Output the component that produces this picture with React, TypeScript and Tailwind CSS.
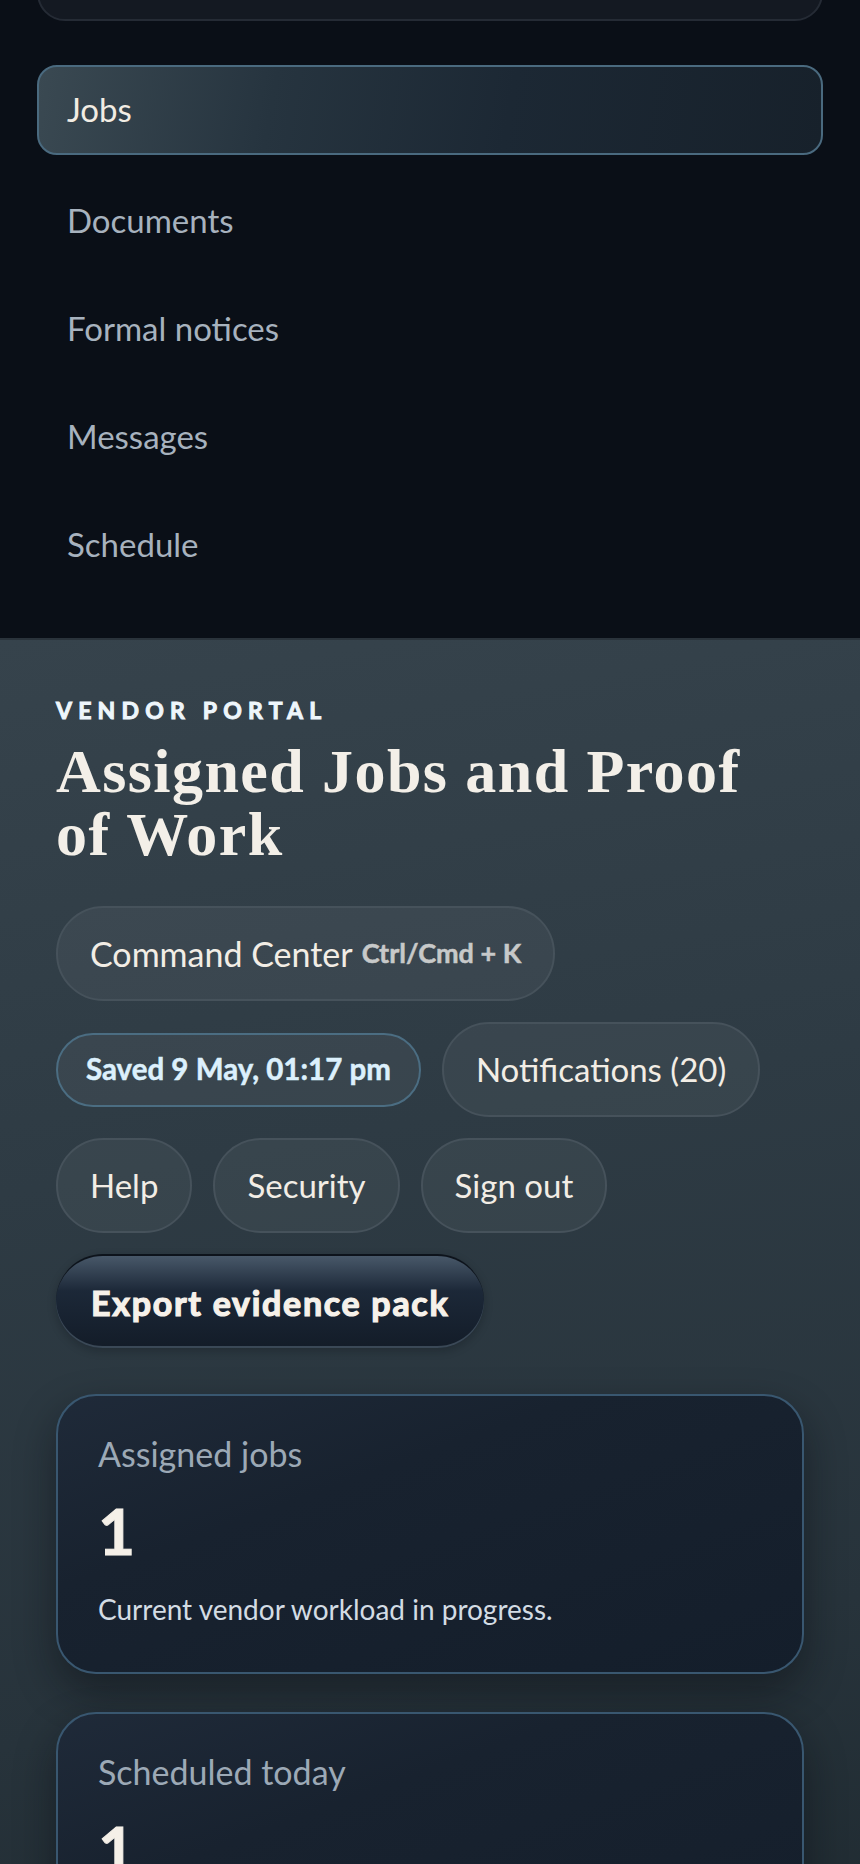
import React from "react";

const sans = "font-['Lato','Noto_Sans',sans-serif]";

function NavItem({ label, active = false }: { label: string; active?: boolean }) {
  if (active) {
    return (
      <div className="flex h-[90px] items-center rounded-[20px] border-2 border-[#4a6a7f] bg-[linear-gradient(100deg,#3a4952_0%,#26343f_30%,#1c2834_60%,#17212b_100%)] px-[28px] text-[33px] text-[#f1ece3]">
        {label}
      </div>
    );
  }
  return (
    <div className="flex h-[90px] items-center rounded-[20px] border-2 border-transparent px-[28px] text-[33px] text-[#a7b2be]">
      {label}
    </div>
  );
}

function Pill({ children, className = "" }: { children: React.ReactNode; className?: string }) {
  return (
    <div
      className={
        "flex h-[95px] items-center rounded-full border-2 border-[#46525b] bg-[#ffffff0d] px-[32px] text-[33px] text-[#f2ede5] " +
        className
      }
    >
      {children}
    </div>
  );
}

function StatCard({ label, value, desc }: { label: string; value: string; desc: string }) {
  return (
    <div className="rounded-[40px] border-2 border-[#395770] bg-[linear-gradient(160deg,#1f2a39_0%,#18222f_35%,#141e2b_100%)] px-[40px] pb-[47px] pt-[40px] shadow-[0_18px_40px_rgba(8,12,16,0.45)]">
      <div className="text-[34px] leading-[36px] text-[#9ca9b6]">{label}</div>
      <div className="mt-[27px] text-[64px] font-bold leading-none text-[#f5f0e8] [-webkit-text-stroke:1px_#f5f0e8]">
        {value}
      </div>
      <div className="mt-[30px] text-[28px] leading-[32px] text-[#d3dce4]">{desc}</div>
    </div>
  );
}

export default function App() {
  return (
    <div className={"w-[860px] overflow-hidden " + sans}>
      {/* Navigation panel */}
      <div className="bg-[#0a0f17] px-[37px] pb-[48px]">
        <div className="-mt-[80px] h-[101px] rounded-[28px] border-2 border-[#252b35] bg-[#141922]" />
        <div className="mt-[44px]">
          <NavItem label="Jobs" active />
        </div>
        <div className="mt-[21px] flex flex-col gap-[18px]">
          <NavItem label="Documents" />
          <NavItem label="Formal notices" />
          <NavItem label="Messages" />
          <NavItem label="Schedule" />
        </div>
      </div>

      {/* Main content */}
      <div className="border-t-2 border-[#2a333b] bg-[linear-gradient(170deg,#36434c_0%,#2e3b44_35%,#27333b_70%,#1d282e_100%)] px-[56px] pb-[80px] pt-[59px]">
        <div className="text-[23px] font-bold uppercase leading-[23px] tracking-[0.27em] text-[#eef6fb] [-webkit-text-stroke:1px_#eef6fb]">
          Vendor Portal
        </div>
        <h1 className="mt-[18px] max-w-[720px] font-['Liberation_Serif','Times_New_Roman',serif] text-[62px] font-bold leading-[63px] tracking-[0.023em] text-[#f3efe8]">
          Assigned Jobs and Proof of Work
        </h1>

        <div className="mt-[40px] flex flex-wrap items-center gap-[21px]">
          <Pill className="text-[34px]">
            <span>Command Center</span>
            <span className="ml-[9px] text-[27px] font-bold text-[#c7c9c9] [-webkit-text-stroke:0.5px_#c7c9c9]">
              Ctrl/Cmd + K
            </span>
          </Pill>
          <div className="flex h-[74px] items-center rounded-full border-2 border-[#4b6d82] bg-[#ffffff0d] px-[28px] text-[29.5px] font-bold text-[#dcf0fc] [-webkit-text-stroke:0.5px_#dcf0fc]">
            Saved 9 May, 01:17 pm
          </div>
          <Pill>Notifications (20)</Pill>
          <Pill>Help</Pill>
          <Pill>Security</Pill>
          <Pill>Sign out</Pill>
          <div className="flex h-[94px] items-center rounded-full border-t-2 border-[#0d131b] bg-[linear-gradient(180deg,#485869_0%,#1c2838_38%,#131c28_100%)] px-[35px] text-[34px] font-bold tracking-[0.05em] text-[#f6f1ea] shadow-[inset_0_-2px_0_#3a4856,0_3px_8px_rgba(6,10,14,0.25)] [-webkit-text-stroke:1.2px_#f6f1ea]">
            Export evidence pack
          </div>
        </div>

        <div className="mt-[46px] flex flex-col gap-[38px]">
          <StatCard label="Assigned jobs" value="1" desc="Current vendor workload in progress." />
          <StatCard label="Scheduled today" value="1" desc="Visits booked for today." />
        </div>
      </div>
    </div>
  );
}
